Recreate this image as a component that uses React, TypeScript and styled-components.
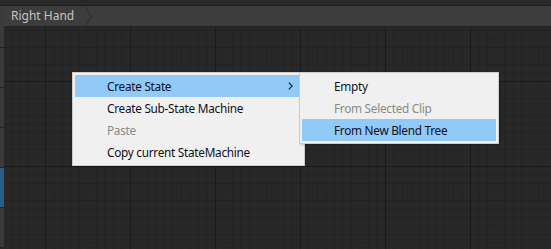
import styled, { createGlobalStyle } from 'styled-components';

const GlobalStyle = createGlobalStyle`
  html, body {
    margin: 0;
    padding: 0;
    background: #282828;
    overflow: hidden;
  }
  * {
    box-sizing: border-box;
  }
`;

interface MenuItem {
  label: string;
  disabled?: boolean;
  active?: boolean;
  submenu?: boolean;
}

const mainItems: MenuItem[] = [
  { label: 'Create State', active: true, submenu: true },
  { label: 'Create Sub-State Machine' },
  { label: 'Paste', disabled: true },
  { label: 'Copy current StateMachine' },
];

const subItems: MenuItem[] = [
  { label: 'Empty' },
  { label: 'From Selected Clip', disabled: true },
  { label: 'From New Blend Tree', active: true },
];

const Chevron = () => (
  <svg width="5" height="8" viewBox="0 0 5 8">
    <path d="M0.8 0.6 L4.2 4 L0.8 7.4" fill="none" stroke="#1e1e2a" strokeWidth="1.2" />
  </svg>
);

const App = () => {
  return (
    <Window>
      <GlobalStyle />
      <TopStrip />
      <Toolbar>
        <Breadcrumb>
          <span>Right Hand</span>
          <svg width="8" height="21" viewBox="0 0 8 21">
            <path d="M0 0 L6 10.5 L0 21" fill="none" stroke="#2c2c2c" strokeWidth="1" />
          </svg>
        </Breadcrumb>
      </Toolbar>
      <Body>
        <LayerStrip>
          {[0, 1, 2, 3, 4, 5].map((i) => (
            <LayerItem key={i} $selected={i === 4} />
          ))}
        </LayerStrip>
        <GraphCanvas>
          <Menu $left={68} $top={45} $width={233}>
            {mainItems.map((item) => (
              <Row key={item.label} $active={item.active} $disabled={item.disabled}>
                <Label>{item.label}</Label>
                {item.submenu && (
                  <Arrow>
                    <Chevron />
                  </Arrow>
                )}
              </Row>
            ))}
          </Menu>
          <Menu $left={295} $top={45} $width={200}>
            {subItems.map((item) => (
              <Row key={item.label} $active={item.active} $disabled={item.disabled}>
                <Label>{item.label}</Label>
              </Row>
            ))}
          </Menu>
        </GraphCanvas>
      </Body>
    </Window>
  );
};

export default App;

const Window = styled.div`
  width: 551px;
  height: 249px;
  display: flex;
  flex-direction: column;
  background: #282828;
  font-family: 'Noto Sans', 'Open Sans', sans-serif;
`;

const TopStrip = styled.div`
  height: 6px;
  background: #292929;
  border-bottom: 1px solid #1f1f1f;
`;

const Toolbar = styled.div`
  height: 21px;
  display: flex;
  align-items: stretch;
  background: #3d3d3d;
  border-bottom: 1px solid #232323;
`;

const Breadcrumb = styled.div`
  display: flex;
  align-items: center;
  padding-left: 11px;
  gap: 11px;
  color: #c4c4c4;
  font-size: 12px;

  span {
    line-height: 20px;
  }
`;

const Body = styled.div`
  flex: 1;
  display: flex;
  min-height: 0;
`;

const LayerStrip = styled.div`
  width: 4px;
  display: flex;
  flex-direction: column;
  margin-top: -19px;
  overflow: hidden;
`;

const LayerItem = styled.div<{ $selected?: boolean }>`
  flex: 0 0 40px;
  background: ${(p) => (p.$selected ? '#2d5b88' : '#3a3a3a')};
  border-bottom: 1px solid #232323;
`;

const GraphCanvas = styled.div`
  position: relative;
  flex: 1;
  background-color: #282828;
  background-image: linear-gradient(to right, #1a1a1a 1px, transparent 1px),
    linear-gradient(to bottom, #1a1a1a 1px, transparent 1px),
    linear-gradient(to right, #232323 1px, transparent 1px),
    linear-gradient(to bottom, #232323 1px, transparent 1px);
  background-size: 85px 85px, 85px 85px, 8.5px 8.5px, 8.5px 8.5px;
  background-position: 41px 54px, 41px 54px, 7px 3px, 7px 3px;
`;

const Menu = styled.div<{ $left: number; $top: number; $width: number }>`
  position: absolute;
  left: ${(p) => p.$left}px;
  top: ${(p) => p.$top}px;
  width: ${(p) => p.$width}px;
  padding: 2px;
  background: #f0f0f0;
  border: 1px solid #cccccc;
  box-shadow: 1px 1px 2px rgba(0, 0, 0, 0.2);
  display: flex;
  flex-direction: column;
`;

const Row = styled.div<{ $active?: boolean; $disabled?: boolean }>`
  height: 22px;
  display: flex;
  align-items: center;
  padding-left: 32px;
  padding-right: 9px;
  font-size: 11.8px;
  letter-spacing: -0.28px;
  background: ${(p) => (p.$active ? '#91c9f7' : 'transparent')};
  color: ${(p) => (p.$disabled ? '#8a8a8a' : '#101018')};
`;

const Label = styled.span`
  flex: 1;
  white-space: nowrap;
`;

const Arrow = styled.span`
  display: flex;
  align-items: center;
`;
